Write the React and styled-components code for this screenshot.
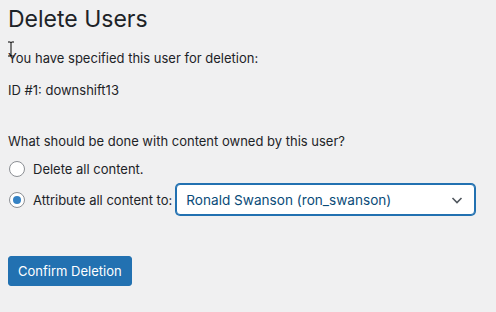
import React, { useState } from "react";
import styled, { createGlobalStyle } from "styled-components";

const GlobalStyle = createGlobalStyle`
  html, body {
    margin: 0;
    padding: 0;
    background: #f0f0f1;
  }
  body {
    font-family: Inter, "Liberation Sans", Arial, sans-serif;
    font-size: 13px;
    color: #1d2327;
  }
`;

const Page = styled.div`
  position: relative;
  width: 496px;
  height: 312px;
  padding: 0 8px;
  box-sizing: border-box;
  overflow: hidden;
`;

const Title = styled.h1`
  margin: 0;
  padding-top: 5px;
  font-size: 23px;
  font-weight: 400;
  line-height: 29px;
`;

const Text = styled.p`
  margin: ${props => props.$top || 0}px 0 0;
  font-size: 13px;
  line-height: 19px;
`;

const Options = styled.ul`
  list-style: none;
  margin: 6px 0 0;
  padding: 0;
  display: flex;
  flex-direction: column;
  gap: ${props => props.$gap || 0}px;
`;

const Option = styled.li`
  display: flex;
  align-items: center;
  gap: 8px;
  height: ${props => props.$height || 24}px;
`;

const Radio = styled.span`
  width: 16px;
  height: 16px;
  box-sizing: border-box;
  border: 1px solid #8c8f94;
  border-radius: 50%;
  background: #fff;
  display: flex;
  align-items: center;
  justify-content: center;
  margin-left: 1px;
  flex-shrink: 0;

  &::after {
    content: "";
    width: 8px;
    height: 8px;
    border-radius: 50%;
    background: #3582c4;
    display: ${props => (props.$checked ? "block" : "none")};
  }
`;

const Select = styled.div`
  width: 299px;
  height: 31px;
  margin-left: -4px;
  box-sizing: border-box;
  border: 1px solid #2271b1;
  border-radius: 4px;
  background: #fff;
  color: #0a4b78;
  font-size: 13.6px;
  display: flex;
  align-items: center;
  justify-content: space-between;
  padding: 0 10px 0 9px;
  box-shadow: 0 0 0 1px #2271b1;
`;

const Button = styled.button`
  margin-top: 41px;
  height: 30px;
  padding: 0 9px;
  border: 1px solid #2271b1;
  border-radius: 3px;
  background: #2271b1;
  color: #fff;
  font-family: inherit;
  font-size: 13px;
  line-height: 28px;
  cursor: pointer;
`;

const Cursor = styled.svg`
  position: absolute;
  left: 7px;
  top: 41px;
`;

export default function App() {
  const [choice, setChoice] = useState("reassign");

  return (
    <>
      <GlobalStyle />
      <Page>
        <Title>Delete Users</Title>
        <Text $top={15}>You have specified this user for deletion:</Text>
        <Text $top={13}>ID #1: downshift13</Text>
        <Text $top={32}>What should be done with content owned by this user?</Text>
        <Options $gap={3}>
          <Option $height={24} onClick={() => setChoice("delete")}>
            <Radio $checked={choice === "delete"} />
            Delete all content.
          </Option>
          <Option $height={31} onClick={() => setChoice("reassign")}>
            <Radio $checked={choice === "reassign"} />
            Attribute all content to:
            <Select>
              Ronald Swanson (ron_swanson)
              <svg width="14" height="14" viewBox="0 0 14 14">
                <path d="M2.5 5 L7 9.5 L11.5 5" fill="none" stroke="#50575e" strokeWidth="1.6" />
              </svg>
            </Select>
          </Option>
        </Options>
        <Button>Confirm Deletion</Button>
        <Cursor width="8" height="16" viewBox="0 0 8 16">
          <path d="M1 1 H3 Q4 1 4 2 V14 Q4 15 3 15 H1 M7 1 H5 Q4 1 4 2 M4 14 Q4 15 5 15 H7" fill="none" stroke="#000" strokeWidth="1" />
        </Cursor>
      </Page>
    </>
  );
}
